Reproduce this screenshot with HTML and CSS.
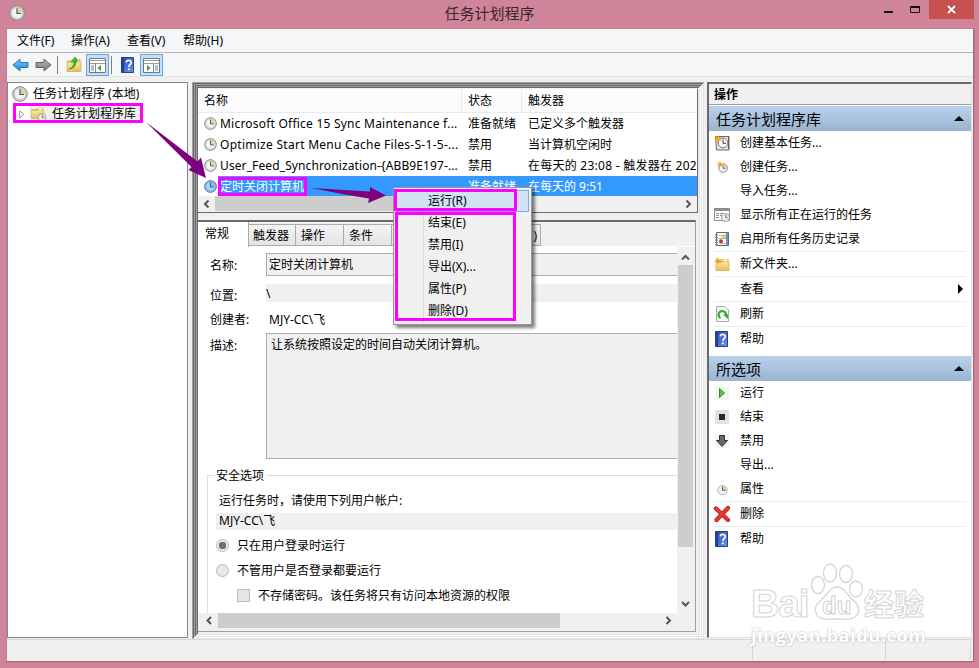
FILE: index.html
```html
<!DOCTYPE html>
<html lang="zh-CN">
<head>
    <meta charset="UTF-8">
    <meta name="viewport" content="width=device-width, initial-scale=1.0">
    <title>任务计划程序</title>
    <link rel="stylesheet" href="styles.css">
</head>
<body>
    <svg class="defs" width="0" height="0">
        <defs>
            <linearGradient id="blueArrow" x1="0" y1="0" x2="0" y2="1">
                <stop offset="0" stop-color="#7ad2fa"/><stop offset="1" stop-color="#1382d0"/>
            </linearGradient>
            <linearGradient id="grayArrow" x1="0" y1="0" x2="0" y2="1">
                <stop offset="0" stop-color="#bbb"/><stop offset="1" stop-color="#777"/>
            </linearGradient>
            <linearGradient id="folderFill" x1="0" y1="0" x2="0" y2="1">
                <stop offset="0" stop-color="#fbe9a8"/><stop offset="1" stop-color="#e3bd5b"/>
            </linearGradient>
            <linearGradient id="helpFill" x1="0" y1="0" x2="1" y2="1">
                <stop offset="0" stop-color="#2448ae"/><stop offset="1" stop-color="#6f93ee"/>
            </linearGradient>
        </defs>
        <symbol id="clock" viewBox="0 0 16 16">
            <circle cx="8" cy="8" r="7.3" fill="#d4d4d2" stroke="#85878a" stroke-width="1"/>
            <circle cx="8" cy="8" r="5.6" fill="#f2f5f8" stroke="#b4b6b8" stroke-width=".6"/>
            <path d="M8 8V2.6A5.4 5.4 0 0 1 13.4 8z" fill="#ecd48c"/>
            <path d="M8 3.2V8.5H12" fill="none" stroke="#4d5665" stroke-width="1.2"/>
        </symbol>
        <symbol id="clock-blue" viewBox="0 0 16 16">
            <circle cx="8" cy="8" r="7.3" fill="#8cbdea" stroke="#3b6fa4" stroke-width="1"/>
            <circle cx="8" cy="8" r="5.5" fill="#a8d1f5" stroke="#6ba0d0" stroke-width=".6"/>
            <path d="M8 8V2.6A5.4 5.4 0 0 1 13.4 8z" fill="#93bcc7"/>
            <path d="M8 3.2V8.5H12" fill="none" stroke="#255a91" stroke-width="1.2"/>
        </symbol>
        <symbol id="folder" viewBox="0 0 16 16">
            <path d="M1 3.5H7L8.5 2H14.5V14.5H1z" fill="#e2b654"/>
            <path d="M9 2.5H13V5H9z" fill="#fff"/>
            <path d="M1 5H15V14.5H1z" fill="url(#folderFill)" stroke="#d8af50" stroke-width=".7"/>
        </symbol>
        <symbol id="star" viewBox="0 0 8 8">
            <path d="M4 0L5 2.5L8 2L6 4L7.5 6.5L4.8 5.5L3.5 8L2.8 5.2L0 5L2.4 3.3L1 1L3.3 2.1z" fill="#f7a51b"/>
        </symbol>
        <symbol id="folder-clock" viewBox="0 0 16 16">
            <use href="#folder" width="14" height="14"/>
            <use href="#clock" x="7" y="7" width="9" height="9"/>
        </symbol>
        <symbol id="help" viewBox="0 0 14 16">
            <path d="M.5.5H12.5V15.5H.5z" fill="url(#helpFill)" stroke="#2a3f86"/>
            <path d="M1 1H3V15H1z" fill="#1d3f9f"/>
            <path d="M5.3 5.5C5.3 2.6 10.2 2.6 10.2 5.4C10.2 7.5 7.8 7.2 7.8 10" fill="none" stroke="#fff" stroke-width="1.7"/>
            <path d="M6.9 11.3H8.7V13.1H6.9z" fill="#fff"/>
        </symbol>
    </svg>

    <div class="titlebar">
        <svg class="app-icon" width="16" height="16"><use href="#clock"/></svg>
        <div class="title">任务计划程序</div>
        <div class="win-buttons">
            <svg width="44" height="20"><path d="M1 12H10" stroke="#111" stroke-width="2"/><path d="M27.500 6.500H36.500V12.500H27.500z" fill="none" stroke="#111"/><path d="M27 7H37" stroke="#111" stroke-width="2"/></svg>
            <div class="close"><svg width="9" height="9"><path d="M1 1L8 8M8 1L1 8" stroke="#fff" stroke-width="1.8"/></svg></div>
        </div>
    </div>

    <div class="window">
        <div class="menubar">
            <span>文件(F)</span><span>操作(A)</span><span>查看(V)</span><span>帮助(H)</span>
        </div>
        <div class="toolbar">
            <svg width="17" height="16"><path d="M1 8L8 2V5.5H16V10.5H8V14z" fill="url(#blueArrow)" stroke="#2b75b0"/></svg>
            <svg width="17" height="16"><path d="M16 8L9 2V5.5H1V10.5H9V14z" fill="url(#grayArrow)" stroke="#626262"/></svg>
            <i class="sep"></i>
            <svg class="up" width="16" height="16"><use href="#folder"/><path d="M3 12C6 11 8 8 8 5H5L9 0L12 4L10 5C10 9 7 12 3 12z" fill="#3cbb25" stroke="#268816" stroke-width=".5"/></svg>
            <div class="tool">
                <svg width="17" height="16"><path d="M.5 1.5H16.5V15.5H.5z" fill="#fff" stroke="#777"/><path d="M1 3.5H16M1 6.5H16" stroke="#999"/><path d="M6.5 7V15" stroke="#888"/><path d="M2 9H5M2 11H5M2 13H5" stroke="#5b7fb5"/><path d="M12 8V14L8.5 11z" fill="#35a51d"/></svg>
            </div>
            <i class="sep second"></i>
            <svg class="tb-help" width="14" height="16"><use href="#help"/></svg>
            <div class="tool">
                <svg width="17" height="16"><path d="M.5 1.5H16.5V15.5H.5z" fill="#fff" stroke="#777"/><path d="M1 3.5H16M1 6.5H16" stroke="#999"/><path d="M10.5 7V15" stroke="#888"/><path d="M12 9H15M12 11H15M12 13H15" stroke="#5b7fb5"/><path d="M4 8V14L7.5 11z" fill="#35a51d"/></svg>
            </div>
        </div>

        <div class="main">
            <div class="tree">
                <div class="node"><svg width="16" height="16"><use href="#clock"/></svg><span>任务计划程序 (本地)</span></div>
                <div class="node child"><svg width="6" height="9"><path d="M.7 1L4.8 4.5L.7 8z" fill="#fff" stroke="#999"/></svg><span class="picked"><svg width="17" height="16"><use href="#folder-clock"/></svg>任务计划程序库</span></div>
            </div>

            <div class="center">
                <div class="list">
                    <div class="row head"><span class="name">名称</span><span>状态</span><span>触发器</span></div>
                    <div class="row"><span class="name"><svg width="13" height="13"><use href="#clock"/></svg><b class="w1">Microsoft Office 15 Sync Maintenance f...</b></span><span>准备就绪</span><span>已定义多个触发器</span></div>
                    <div class="row"><span class="name"><svg width="13" height="13"><use href="#clock"/></svg><b class="w2">Optimize Start Menu Cache Files-S-1-5-...</b></span><span>禁用</span><span>当计算机空闲时</span></div>
                    <div class="row"><span class="name"><svg width="13" height="13"><use href="#clock"/></svg><b class="w3">User_Feed_Synchronization-{ABB9E197-...</b></span><span>禁用</span><span class="when">在每天的 23:08 - 触发器在 202</span></div>
                    <div class="row selected"><span class="name"><svg width="13" height="13"><use href="#clock-blue"/></svg><b>定时关闭计算机</b></span><span>准备就绪</span><span>在每天的 9:51</span></div>
                    <div class="hscroll">
                        <svg width="17" height="16"><path d="M10.5 4.5L7 8L10.5 11.5" fill="none" stroke="#555" stroke-width="2"/></svg>
                        <div class="thumb"></div>
                        <svg width="17" height="16"><path d="M6.5 4.5L10 8L6.5 11.5" fill="none" stroke="#555" stroke-width="2"/></svg>
                    </div>
                </div>

                <div class="details">
                    <div class="tabs">
                        <div class="tab active">常规</div><div class="tab short">触发器</div><div class="tab">操作</div><div class="tab">条件</div><div class="tab"></div><div class="tab last">)</div>
                    </div>
                    <div class="scroller">
                        <div class="form">
                            <div class="field name-field"><label>名称:</label><div class="box">定时关闭计算机</div></div>
                            <div class="field place"><label>位置:</label><div class="flat">\</div></div>
                            <div class="field owner"><label>创建者:</label><div>MJY-CC\飞</div></div>
                            <div class="field desc"><label>描述:</label><div class="box">让系统按照设定的时间自动关闭计算机。</div></div>
                            <div class="security">
                                <div class="legend"><span>安全选项</span></div>
                                <p>运行任务时，请使用下列用户帐户:</p>
                                <div class="account">MJY-CC\飞</div>
                                <div class="option"><i class="radio checked"></i>只在用户登录时运行</div>
                                <div class="option"><i class="radio"></i>不管用户是否登录都要运行</div>
                                <div class="option sub"><i class="check"></i>不存储密码。该任务将只有访问本地资源的权限</div>
                            </div>
                        </div>
                        <div class="vscroll">
                            <svg width="15" height="16"><path d="M4 10.5L7.5 7L11 10.5" fill="none" stroke="#555" stroke-width="2"/></svg>
                            <div class="thumb"></div>
                            <svg width="15" height="16"><path d="M4 6L7.5 9.5L11 6" fill="none" stroke="#555" stroke-width="2"/></svg>
                        </div>
                    </div>
                    <div class="hscroll">
                        <svg width="17" height="15"><path d="M10 4L6.5 7.5L10 11" fill="none" stroke="#555" stroke-width="2"/></svg>
                        <div class="thumb"></div>
                        <svg width="17" height="15"><path d="M6.5 4L10 7.5L6.5 11" fill="none" stroke="#555" stroke-width="2"/></svg>
                    </div>
                </div>
            </div>

            <div class="actions">
                <div class="actions-title">操作</div>
                <div class="group-title"><span>任务计划程序库</span><i class="up-tri"></i></div>
                <div class="group first">
                    <div class="item"><svg width="16" height="16"><path d="M1.5 1.5H15V15H2.5z" fill="#e6e3df" stroke="#75665f"/><path d="M14.5 1V14" stroke="#9a4a3d"/><circle cx="9" cy="8" r="4.8" fill="#fff" stroke="#67798b"/><path d="M9 4.5V8.3H12" fill="none" stroke="#345"/><use href="#star" width="8" height="8"/></svg>创建基本任务...</div>
                    <div class="item"><svg width="16" height="16"><use href="#clock" x="4" y="4" width="10" height="10"/><use href="#star" x="2" y="2" width="8" height="7"/></svg>创建任务...</div>
                    <div class="item"><svg width="16" height="16"></svg>导入任务...</div>
                    <div class="item"><svg width="16" height="16"><path d="M.5 1.5H15.5V13.5H.5z" fill="#fff" stroke="#858b91"/><path d="M1 3H15" stroke="#8b9299" stroke-width="2"/><path d="M2 6.5H5M6 6.5H9M2 8.5H5M6 8.5H9M2 10.5H5" stroke="#8a929c"/><use href="#clock" x="7" y="6" width="9" height="9"/></svg>显示所有正在运行的任务</div>
                    <div class="item"><svg width="16" height="16"><path d="M2.5 1.5H14.5V14.5H2.5z" fill="#f7fafc" stroke="#536b87"/><path d="M13 2V14" stroke="#7891b0" stroke-width="2"/><path d="M5 4.5H12M5 7.5H12M5 12.5H12" stroke="#a5b5c6"/><path d="M10 2.5L12.3 7H7.7z" fill="#efc62d"/><circle cx="7" cy="10.3" r="2" fill="#d42d2d"/><path d="M1 4H4M1 6.5H4M1 9H4M1 11.5H4M1 14H4" stroke="#6a7888"/></svg>启用所有任务历史记录</div>
                    <div class="item line"><svg width="16" height="16"><use href="#folder" x="1" y="1" width="15" height="15"/><use href="#star" width="8" height="8" y="1"/></svg>新文件夹...</div>
                    <div class="item line"><svg width="16" height="16"></svg>查看<i class="right-tri"></i></div>
                    <div class="item line"><svg width="16" height="16"><path d="M2.5.5H11L14.5 4V15.5H2.5z" fill="#f7f8f8" stroke="#a4acb0"/><path d="M6.5 12A3.700 3.700 0 1 1 12 9" fill="none" stroke="#2fab25" stroke-width="2"/><path d="M9 8.500H14V13z" fill="#2fab25"/></svg>刷新</div>
                    <div class="item line"><svg width="16" height="16"><use href="#help" x="1" width="14" height="16"/></svg>帮助</div>
                </div>
                <div class="group-title"><span>所选项</span><i class="up-tri"></i></div>
                <div class="group">
                    <div class="item"><svg width="16" height="16"><path d="M1 1H15V15H1z" fill="#f4f4f4"/><path d="M5.5 3.5L10.5 8L5.5 12.5z" fill="#50ce37" stroke="#269619"/></svg>运行</div>
                    <div class="item"><svg width="16" height="16"><path d="M1 1H15V15H1z" fill="#e2e2e2"/><path d="M5 5H11V11H5z" fill="#292929"/></svg>结束</div>
                    <div class="item"><svg width="16" height="16"><path d="M1 1H15V15H1z" fill="#f4f4f4"/><path d="M5.5 2.5H10.5V7.5H13.5L8 13.5L2.5 7.5H5.5z" fill="#666" stroke="#333"/></svg>禁用</div>
                    <div class="item"><svg width="16" height="16"></svg>导出...</div>
                    <div class="item"><svg width="16" height="16"><circle cx="8.5" cy="9" r="4.7" fill="#eaf3f9" stroke="#a4b8c6"/><path d="M8.5 9V4A5 5 0 0 1 13.5 9z" fill="#f3cf87"/><path d="M8.5 5.5V9.3H11.5" fill="none" stroke="#345e88"/></svg>属性</div>
                    <div class="item line"><svg width="16" height="16"><path d="M2 2.5L14 14M14 2L2.5 14" stroke="#a51b1b" stroke-width="4.2" stroke-linecap="round"/><path d="M2.2 2.5L14 14M14 2L2.5 14" stroke="#ee3434" stroke-width="3" stroke-linecap="round"/></svg>删除</div>
                    <div class="item line"><svg width="16" height="16"><use href="#help" x="1" width="14" height="16"/></svg>帮助</div>
                </div>
            </div>
        </div>

        <div class="status"><i></i><i></i><i></i></div>
    </div>

    <div class="context-menu">
        <div class="entry hot">运行(R)</div>
        <div class="entry">结束(E)</div>
        <div class="entry">禁用(I)</div>
        <div class="entry">导出(X)...</div>
        <div class="entry">属性(P)</div>
        <div class="entry">删除(D)</div>
    </div>

    <!-- highlight boxes and arrows over the window -->
    <div class="mark mark-tree"></div>
    <div class="mark mark-task"></div>
    <div class="mark mark-run"></div>
    <div class="mark mark-rest"></div>
    <svg class="arrows" width="979" height="668">
        <path d="M146 122L197.5 161.5L201 157.5L206 178L188.5 170L191.500 167z" fill="#7f007f"/>
        <path d="M311 188L370 191.5L370 187L386 195.5L368 203L369 198.5L345 194.5z" fill="#7f007f"/>
    </svg>

    <div class="watermark">
        <span class="bai">Bai</span>
        <svg width="50" height="60">
            <g fill="#fff" stroke="#d5d5d5" stroke-width="1.3">
                <ellipse cx="7" cy="22" rx="6.5" ry="8.500"/>
                <ellipse cx="19" cy="10" rx="6.5" ry="9"/>
                <ellipse cx="35" cy="11" rx="6.5" ry="8.5"/>
                <ellipse cx="45" cy="26" rx="6.5" ry="8"/>
                <path d="M26 24C34 24 35 32 42 37C48 42 49 48 46 52C42 58 35 56 26 56C17 56 10 58 6 52C2 46 5 41 10 37C17 32 18 24 26 24z"/>
            </g>
            <text class="du" x="11" y="51">du</text>
        </svg>
        <span class="jy">经验</span>
        <span class="url">jingyan.baidu.com</span>
    </div>
</body>
</html>
```
FILE: styles.css
```css
* {
    margin: 0;
    padding: 0;
    box-sizing: border-box;
}

body {
    width: 979px;
    height: 668px;
    overflow: hidden;
    position: relative;
    background-color: #d08499;
    font-family: "Noto Sans", "Noto Sans CJK SC", sans-serif;
    font-size: 12px;
    line-height: 16px;
    color: #000;
}

svg {
    display: block;
    flex: none;
    overflow: visible;
}

.defs {
    position: absolute;
}

/* title bar */
.titlebar {
    height: 29px;
    display: flex;
    justify-content: space-between;
    padding-left: 9px;
}
.app-icon {
    margin-top: 5px;
}
.title {
    font-size: 15px;
    line-height: 27px;
    color: #37252b;
    padding-left: 71px;
}
.win-buttons {
    display: flex;
    width: 92px;
    margin-right: 4px;
}
.close {
    width: 45px;
    height: 19px;
    margin-left: 2px;
    background-color: #c75050;
    display: flex;
    align-items: center;
    justify-content: center;
}

.window {
    width: 967px;
    height: 633px;
    margin-left: 7px;
    background-color: #f0f0f0;
    border-right: 1px solid #a5667a;
    border-bottom: 1px solid #a5667a;
    outline: 1px solid #c57d90;
    display: flex;
    flex-direction: column;
}
.menubar {
    height: 24px;
    background-color: #f5f6f7;
    border-bottom: 1px solid #b5b6b7;
    display: flex;
    padding-left: 10px;
    line-height: 24px;
}
.menubar span {
    width: 56px;
}
.menubar span:first-child {
    width: 54px;
}
.toolbar {
    height: 24px;
    background-color: #f5f6f7;
    border-bottom: 1px solid #e4e5e6;
    display: flex;
    align-items: center;
    padding-left: 5px;
    gap: 6px;
}
.sep {
    width: 1px;
    height: 18px;
    background-color: #808080;
    margin-left: -1px;
    margin-right: 2px;
}
.second {
    margin: 0 3px 0 -4px;
}
.tool {
    width: 23px;
    height: 22px;
    border: 1px solid #6ba4da;
    background-color: #c3e0fa;
    display: flex;
    align-items: center;
    justify-content: center;
    margin-left: -2px;
}
.tb-help {
    margin: 0 1px 0 0;
}

.main {
    display: flex;
    flex: none;
    height: 562px;
    padding-top: 5px;
}

/* tree */
.tree {
    width: 181px;
    height: 556px;
    background-color: #fff;
    border: 1px solid #828790;
    margin-right: 4px;
    padding: 1px 0 0 4px;
}
.node {
    display: flex;
    align-items: center;
    height: 20px;
    gap: 5px;
}
.child {
    padding-left: 7px;
}
.picked {
    display: flex;
    align-items: center;
    gap: 5px;
    background-color: #f0f0f0;
    padding: 0 4px 0 1px;
    margin-left: -1px;
}

/* task list and details */
.center {
    width: 512px;
    height: 557px;
    padding: 7px 6px 6px 6px;
    box-shadow: inset 1px 1px #a0a0a0, inset -1px -1px #e3e3e3,
        inset 2px 2px #696969, inset -2px -2px #fff,
        inset 3px 3px #a0a0a0, inset -3px -3px #e3e3e3,
        inset 4px 4px #696969, inset -4px -4px #fff,
        inset 5px 5px #a0a0a0, inset -5px -5px #e3e3e3,
        inset 6px 6px #696969;
}
.list {
    height: 124px;
    width: 500px;
    background-color: #fff;
    border-right: 1px solid #696969;
    border-bottom: 1px solid #696969;
    overflow: hidden;
}
.row {
    display: grid;
    grid-template-columns: 264px 60px 170px;
    height: 21px;
    line-height: 21px;
    white-space: nowrap;
    padding-left: 6px;
}
.row > span {
    overflow: hidden;
}
.head {
    height: 24px;
    line-height: 24px;
    background-color: #fcfcfc;
    border-bottom: 1px solid #e2ebf6;
}
.head > span:not(:first-child) {
    box-shadow: -1px 0 #e2ebf6;
    margin-left: -6px;
    padding-left: 6px;
}
.row .name {
    display: flex;
    align-items: center;
    gap: 3px;
}
.row b {
    font-weight: normal;
}
.w1 {
    letter-spacing: 0.22px;
}
.w2 {
    letter-spacing: 0.27px;
}
.w3 {
    letter-spacing: 0.11px;
}
.when {
    letter-spacing: 0.25px;
}
.selected {
    color: #fff;
    background: linear-gradient(to right, #fff 20px, #3399ff 20px);
    height: 20px;
}
.hscroll {
    display: flex;
    background-color: #f0f0f0;
    height: 17px;
}
.hscroll .thumb {
    background-color: #cdcdcd;
    height: 15px;
}
.list .thumb {
    width: 300px;
}
.list .hscroll svg:last-child {
    margin-left: auto;
}

.details {
    margin-top: 7px;
    height: 412px;
    width: 498px;
    border-top: 2px solid #696969;
    border-right: 1px solid #a0a0a0;
    border-bottom: 1px solid #a0a0a0;
}
.tabs {
    display: flex;
    height: 25px;
    align-items: flex-end;
    border-bottom: 1px solid #fff;
}
.tab {
    width: 48px;
    height: 22px;
    line-height: 21px;
    padding-left: 5px;
    border: 1px solid #acacac;
    border-left: none;
    background-image: linear-gradient(#f3f3f3, #e4e4e4);
    white-space: nowrap;
    overflow: hidden;
}
.short {
    width: 47px;
    padding-left: 4px;
}
.active {
    width: 51px;
    height: 25px;
    line-height: 23px;
    padding-left: 7px;
    background: #fff;
    border: none;
    border-right: 1px solid #acacac;
    margin-bottom: -1px;
}
.last {
    width: 101px;
    text-align: right;
    padding-right: 3px;
}
.scroller {
    display: flex;
    height: 366px;
}
.form {
    width: 479px;
    background-color: #fff;
    padding: 6px 0 0 0;
    overflow: hidden;
}
.field {
    display: flex;
    padding-left: 12px;
}
.field label {
    width: 56px;
    flex: none;
}
.field > div {
    flex: 1;
}
.box {
    background-color: #f0f0f0;
    border: 1px solid #abadb3;
    border-right: none;
}
.name-field label {
    padding-top: 5px;
}
.name-field .box {
    height: 23px;
    line-height: 22px;
    padding-left: 2px;
}
.place {
    height: 18px;
    margin-top: 8px;
}
.place label {
    padding-top: 4px;
}
.flat {
    background-color: #f0f0f0;
    line-height: 19px;
}
.owner {
    margin-top: 10px;
}
.owner div {
    padding-left: 3px;
}
.desc {
    margin-top: 5px;
}
.desc label {
    padding-top: 5px;
}
.desc .box {
    height: 126px;
    padding: 2px 0 0 4px;
    line-height: 18px;
}
.security {
    margin: 16px 0 0 9px;
    border: 1px solid #dcdcdc;
    border-right: none;
    height: 150px;
    padding-left: 9px;
}
.legend {
    height: 16px;
    margin-top: -8px;
}
.legend span {
    background-color: #fff;
    padding: 0 3px 0 1px;
    margin-left: -2px;
}
.security p {
    margin: 9px 0 4px 2px;
}
.account {
    background-color: #f0f0f0;
    height: 17px;
    padding-left: 3px;
    margin-left: -1px;
}
.option {
    display: flex;
    align-items: center;
    gap: 8px;
    height: 25px;
    margin-left: -1px;
}
.account + .option {
    margin-top: 3px;
}
.sub {
    padding-left: 21px;
}
.radio {
    width: 13px;
    height: 13px;
    border-radius: 50%;
    border: 1px solid #b8b8b8;
    background-color: #e8e8e8;
}
.checked {
    background: radial-gradient(circle, #707070 3.5px, #e8e8e8 4px);
}
.check {
    width: 13px;
    height: 13px;
    border: 1px solid #bcbcbc;
    background-color: #e6e6e6;
}
.vscroll {
    width: 16px;
    padding-left: 1px;
    background-color: #f0f0f0;
    padding-top: 2px;
}
.vscroll .thumb {
    height: 282px;
    background-color: #cdcdcd;
}
.vscroll svg:last-child {
    margin-top: 49px;
}
.details .hscroll {
    height: 15px;
    margin-left: 3px;
}
.details .hscroll .thumb {
    width: 342px;
}
.details .hscroll svg:last-child {
    margin-left: 100px;
}

/* actions pane */
.actions {
    width: 265px;
    height: 556px;
    margin-left: 3px;
    background-color: #fff;
    border: 2px solid #696969;
    border-right: 1px solid #e3e3e3;
    border-bottom: 1px solid #e3e3e3;
}
.actions-title {
    height: 21px;
    background-color: #f0f0f0;
    border-bottom: 1px solid #a0a0a0;
    font-weight: bold;
    padding-left: 5px;
    line-height: 21px;
    margin-bottom: 1px;
}
.group-title {
    height: 25px;
    display: flex;
    align-items: center;
    justify-content: space-between;
    padding: 0 7px;
    background-image: linear-gradient(#b9d1ea, #9ab4d1);
    font-size: 15px;
}
.up-tri {
    border: 5px solid transparent;
    border-top: none;
    border-bottom-color: #000;
}
.item {
    height: 24px;
    display: flex;
    align-items: center;
    gap: 10px;
    margin: 0 5px;
}
.line {
    height: 25px;
    border-top: 1px solid #ececec;
}
.first {
    height: 225px;
}
.right-tri {
    border: 5px solid transparent;
    border-right: none;
    border-left-color: #000;
    margin-left: auto;
    margin-right: 3px;
}

.status {
    height: 22px;
    border-top: 1px solid #d9d9d9;
    display: flex;
    justify-content: flex-end;
    padding: 1px 2px 1px 0;
}
.status i {
    border-right: 1px solid #d4d4d4;
    width: 85px;
}
.status i:nth-child(2) {
    width: 133px;
}

/* context menu */
.context-menu {
    position: absolute;
    left: 393px;
    top: 187px;
    width: 139px;
    height: 138px;
    padding: 2px 2px;
    border: 1px solid #979797;
    background: linear-gradient(to right, #f0f0f0 29px, #dcdcdc 29px, #dcdcdc 30px, #f0f0f0 30px);
    box-shadow: 3px 3px 3px rgba(0, 0, 0, 0.5);
}
.entry {
    height: 22px;
    line-height: 22px;
    padding-left: 32px;
}
.hot {
    border: 1px solid #78aee5;
    background-color: #d1e2f2;
    line-height: 20px;
    padding-left: 31px;
}

.mark {
    position: absolute;
    border: 3px solid #ff00ff;
}
.mark-tree {
    left: 13px;
    top: 103px;
    width: 130px;
    height: 20px;
}
.mark-task {
    left: 218px;
    top: 177px;
    width: 89px;
    height: 19px;
}
.mark-run {
    left: 394px;
    top: 189px;
    width: 123px;
    height: 22px;
}
.mark-rest {
    left: 395px;
    top: 212px;
    width: 121px;
    height: 109px;
}
.arrows {
    position: absolute;
    left: 0;
    top: 0;
}

/* watermark */
.watermark {
    position: absolute;
    left: 751px;
    top: 563px;
    width: 180px;
    display: flex;
    flex-wrap: wrap;
    color: #fff;
    -webkit-text-stroke: 1px #d5d5d5;
    font-weight: bold;
}
.watermark svg {
    margin-left: 3px;
}
.bai {
    font: bold 39px "Liberation Sans", sans-serif;
    line-height: 82px;
    height: 60px;
    width: 57px;
    letter-spacing: -1px;
}
.du {
    font: bold 24px "Liberation Sans", sans-serif;
    fill: #fff;
    stroke: #d0d0d0;
    stroke-width: 1px;
}
.jy {
    font-size: 30px;
    line-height: 82px;
    height: 60px;
    margin-left: 3px;
}
.url {
    font: bold 18px "Open Sans", sans-serif;
    line-height: 24px;
    -webkit-text-stroke: 0;
    text-shadow: 0 0 2px #aaa;
    letter-spacing: 0.6px;
}
```
